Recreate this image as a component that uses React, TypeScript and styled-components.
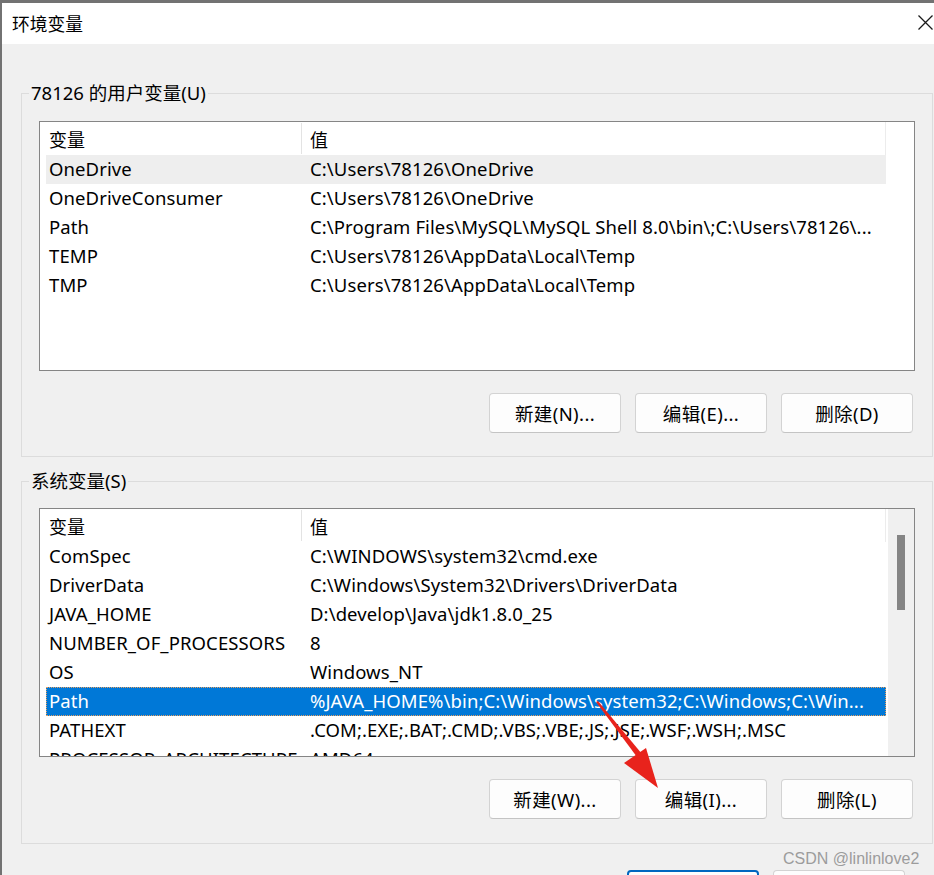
import React from 'react';
import styled, { createGlobalStyle } from 'styled-components';

const Global = createGlobalStyle`
  html, body { margin: 0; padding: 0; background: #727272; overflow: hidden; }
  #root { width: 934px; height: 875px; overflow: hidden; }
`;

const Dialog = styled.div`
  position: relative;
  margin: 3px 0 0 2px;
  width: 952px;
  height: 872px;
  background: #f0f0f0;
  display: flex;
  flex-direction: column;
  font-family: "Noto Sans", "Noto Sans CJK SC", sans-serif;
  font-size: 18.5px;
  color: #000;
`;

const TitleBar = styled.div`
  height: 41px;
  flex: none;
  background: #fff;
  display: flex;
  align-items: center;
  justify-content: space-between;
  padding: 0 21px 0 10px;
`;

const Title = styled.span`
  font-family: "Noto Sans CJK SC", sans-serif;
  font-size: 17.75px;
  line-height: 1;
  padding-top: 1px;
`;

const Body = styled.div`
  display: flex;
  flex-direction: column;
  padding: 0 21px 0 19px;
`;

const Group = styled.fieldset<{ $top: number; $bottom: number }>`
  margin: ${(p) => p.$top}px 0 0;
  padding: 0 17px ${(p) => p.$bottom}px;
  border: 1px solid #dcdcdc;
  min-inline-size: 0;
`;

const Legend = styled.legend`
  margin-left: -10px;
  padding: 0 2px;
  line-height: 24px;
  font-size: 18.5px;
`;

const List = styled.div<{ $top: number; $height: number }>`
  margin-top: ${(p) => p.$top}px;
  height: ${(p) => p.$height}px;
  box-sizing: border-box;
  border: 1px solid #858585;
  background: #fff;
  display: grid;
  grid-template-columns: 1fr 26px;
  overflow: hidden;
`;

const ListMain = styled.div`
  padding: 0 2px 0 6px;
  display: flex;
  flex-direction: column;
  overflow: hidden;
  min-width: 0;
`;

const Header = styled.div`
  flex: none;
  display: grid;
  grid-template-columns: 255px 1fr;
  height: 33px;
  border-right: 1px solid #ececec;
`;

const HeadCell = styled.div<{ $second?: boolean }>`
  display: flex;
  align-items: center;
  padding-left: ${(p) => (p.$second ? 8 : 3)}px;
  border-left: ${(p) => (p.$second ? '1px solid #e3e3e3' : 'none')};
  margin: 1px 0 1px;
  font-family: "Noto Sans CJK SC", sans-serif;
  font-size: 18px;
`;

const Row = styled.div<{ $state?: 'hover' | 'selected' }>`
  flex: none;
  display: grid;
  grid-template-columns: 255px 1fr;
  height: 29px;
  align-items: start;
  box-sizing: border-box;
  background: ${(p) =>
    p.$state === 'selected' ? '#0078d7' : p.$state === 'hover' ? '#eeeeee' : 'transparent'};
  color: ${(p) => (p.$state === 'selected' ? '#fff' : '#000')};
  outline: ${(p) => (p.$state === 'selected' ? '1px dotted #e8a060' : 'none')};
  outline-offset: -1px;
`;

const Cell = styled.div<{ $second?: boolean }>`
  padding-left: ${(p) => (p.$second ? 9 : 3)}px;
  white-space: nowrap;
  overflow: hidden;
  line-height: 27px;
  letter-spacing: 0.1px;
`;

const Track = styled.div<{ $visible: boolean }>`
  background: ${(p) => (p.$visible ? '#f0f0f0' : '#fff')};
  display: flex;
  justify-content: center;
`;

const Thumb = styled.div`
  margin-top: 26px;
  width: 8px;
  height: 75px;
  background: #858585;
`;

const ButtonRow = styled.div<{ $top: number }>`
  display: flex;
  justify-content: flex-end;
  gap: 14px;
  margin: ${(p) => p.$top}px 2px 0 0;
`;

const Button = styled.button<{ $default?: boolean }>`
  width: 132px;
  height: 40px;
  box-sizing: border-box;
  background: #fdfdfd;
  border: ${(p) => (p.$default ? '2px solid #0067c0' : '1px solid #d3d3d3')};
  border-bottom-color: ${(p) => (p.$default ? '#0067c0' : '#c4c4c4')};
  border-radius: 4px;
  font-family: "Noto Sans", "Noto Sans CJK SC", sans-serif;
  font-size: 18.5px;
  letter-spacing: 0.4px;
  color: #000;
  padding: 0;
`;

const Footer = styled.div`
  display: flex;
  justify-content: flex-end;
  gap: 14px;
  margin-top: 26px;
  padding-right: 28px;
`;

const Watermark = styled.div`
  position: absolute;
  left: 781px;
  top: 847px;
  font-family: "Liberation Sans", Arial, sans-serif;
  font-size: 16px;
  color: #9c9c9c;
`;

const Overlay = styled.svg`
  position: absolute;
  left: 0;
  top: 0;
  pointer-events: none;
`;

type Item = { name: string; value: string; state?: 'hover' | 'selected' };

const userVars: Item[] = [
  { name: 'OneDrive', value: String.raw`C:\Users\78126\OneDrive`, state: 'hover' },
  { name: 'OneDriveConsumer', value: String.raw`C:\Users\78126\OneDrive` },
  { name: 'Path', value: String.raw`C:\Program Files\MySQL\MySQL Shell 8.0\bin\;C:\Users\78126\...` },
  { name: 'TEMP', value: String.raw`C:\Users\78126\AppData\Local\Temp` },
  { name: 'TMP', value: String.raw`C:\Users\78126\AppData\Local\Temp` },
];

const sysVars: Item[] = [
  { name: 'ComSpec', value: String.raw`C:\WINDOWS\system32\cmd.exe` },
  { name: 'DriverData', value: String.raw`C:\Windows\System32\Drivers\DriverData` },
  { name: 'JAVA_HOME', value: String.raw`D:\develop\Java\jdk1.8.0_25` },
  { name: 'NUMBER_OF_PROCESSORS', value: '8' },
  { name: 'OS', value: 'Windows_NT' },
  { name: 'Path', value: String.raw`%JAVA_HOME%\bin;C:\Windows\system32;C:\Windows;C:\Win...`, state: 'selected' },
  { name: 'PATHEXT', value: '.COM;.EXE;.BAT;.CMD;.VBS;.VBE;.JS;.JSE;.WSF;.WSH;.MSC' },
  { name: 'PROCESSOR_ARCHITECTURE', value: 'AMD64' },
];

function VarList({ items, top, height, scroll }: { items: Item[]; top: number; height: number; scroll: boolean }) {
  return (
    <List $top={top} $height={height}>
      <ListMain>
        <Header>
          <HeadCell>变量</HeadCell>
          <HeadCell $second>值</HeadCell>
        </Header>
        {items.map((it, i) => (
          <Row key={i} $state={it.state}>
            <Cell>{it.name}</Cell>
            <Cell $second>{it.value}</Cell>
          </Row>
        ))}
      </ListMain>
      <Track $visible={scroll}>{scroll && <Thumb />}</Track>
    </List>
  );
}

function CloseIcon() {
  return (
    <svg width="15" height="15" viewBox="0 0 15 15" style={{ marginTop: -2 }}>
      <path d="M0.5 0.5 L14.5 14.5 M14.5 0.5 L0.5 14.5" stroke="#1a1a1a" strokeWidth="1.3" fill="none" />
    </svg>
  );
}

export default function App() {
  return (
    <>
      <Global />
      <Dialog>
        <TitleBar>
          <Title>环境变量</Title>
          <CloseIcon />
        </TitleBar>
        <Body>
          <Group $top={37} $bottom={23}>
            <Legend>78126 的用户变量(U)</Legend>
            <VarList items={userVars} top={16} height={250} scroll={false} />
            <ButtonRow $top={22}>
              <Button>新建(N)...</Button>
              <Button>编辑(E)...</Button>
              <Button>删除(D)</Button>
            </ButtonRow>
          </Group>
          <Group $top={12} $bottom={24}>
            <Legend>系统变量(S)</Legend>
            <VarList items={sysVars} top={15} height={249} scroll />
            <ButtonRow $top={22}>
              <Button>新建(W)...</Button>
              <Button>编辑(I)...</Button>
              <Button>删除(L)</Button>
            </ButtonRow>
          </Group>
          <Footer>
            <Button $default />
            <Button />
          </Footer>
        </Body>
        <Watermark>CSDN @linlinlove2</Watermark>
        <Overlay width="952" height="872" viewBox="2 3 952 872">
          <polygon points="596,702 598,701 642,754 637,757" fill="#e8231c" />
          <polygon points="624,763 646,748 658,788" fill="#e8231c" />
        </Overlay>
      </Dialog>
    </>
  );
}
